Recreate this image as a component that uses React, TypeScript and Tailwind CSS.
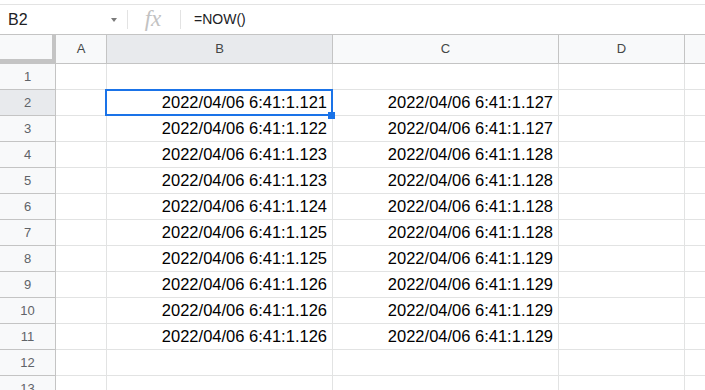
import React from "react";

const colB = [
  "2022/04/06 6:41:1.121",
  "2022/04/06 6:41:1.122",
  "2022/04/06 6:41:1.123",
  "2022/04/06 6:41:1.123",
  "2022/04/06 6:41:1.124",
  "2022/04/06 6:41:1.125",
  "2022/04/06 6:41:1.125",
  "2022/04/06 6:41:1.126",
  "2022/04/06 6:41:1.126",
  "2022/04/06 6:41:1.126",
];
const colC = [
  "2022/04/06 6:41:1.127",
  "2022/04/06 6:41:1.127",
  "2022/04/06 6:41:1.128",
  "2022/04/06 6:41:1.128",
  "2022/04/06 6:41:1.128",
  "2022/04/06 6:41:1.128",
  "2022/04/06 6:41:1.129",
  "2022/04/06 6:41:1.129",
  "2022/04/06 6:41:1.129",
  "2022/04/06 6:41:1.129",
];

export default function App() {
  const rows = Array.from({ length: 13 }, (_, i) => i + 1);
  return (
    <div
      className="w-[705px] h-[390px] overflow-hidden bg-white"
      style={{ fontFamily: '"Liberation Sans", Arial, sans-serif' }}
    >
      {/* formula bar */}
      <div className="mt-[4px] h-[31px] border-y border-t-[#e3e3e3] border-b-[#c4c4c4] flex items-center">
        <div className="w-[127px] flex items-center pl-[8px] pr-[10px]">
          <span className="text-[16px] text-[#202124] flex-1">B2</span>
          <span className="w-0 h-0 border-l-[3px] border-r-[3px] border-t-[4px] border-l-transparent border-r-transparent border-t-[#7a7a7a] mt-[1px]" />
        </div>
        <div className="w-px h-[19px] bg-[#e3e3e3]" />
        <div className="w-[52px] flex justify-center pr-[2px]">
          <span
            className="italic text-[23px] text-[#c2c2c2] leading-none -mt-[2px]"
            style={{ fontFamily: '"Liberation Serif", "Times New Roman", serif' }}
          >
            fx
          </span>
        </div>
        <div className="w-px h-[19px] bg-[#e3e3e3]" />
        <span className="ml-[13px] text-[14px] text-[#202124]">=NOW()</span>
      </div>

      {/* column header */}
      <div className="flex h-[29px] bg-[#f8f9fa] border-b border-[#c4c4c4] text-[13px] text-[#444746]">
        <div className="w-[56px] h-full border-r-[4px] border-b-[4px] border-[#c4c4c4] bg-[#f8f9fa]" />
        <div className="w-[51px] border-r border-[#c4c4c4] flex items-center justify-center">A</div>
        <div className="w-[226px] border-r border-[#c4c4c4] flex items-center justify-center bg-[#e8eaed]">B</div>
        <div className="w-[226px] border-r border-[#c4c4c4] flex items-center justify-center">C</div>
        <div className="w-[126px] border-r border-[#c4c4c4] flex items-center justify-center">D</div>
        <div className="flex-1" />
      </div>

      {/* rows */}
      {rows.map((r) => {
        const b = r >= 2 && r <= 11 ? colB[r - 2] : "";
        const c = r >= 2 && r <= 11 ? colC[r - 2] : "";
        const sel = r === 2;
        return (
          <div key={r} className="flex h-[26px]">
            <div
              className={`w-[56px] border-r border-b border-[#c4c4c4] flex items-center justify-center text-[13px] text-[#5f6368] ${
                sel ? "bg-[#e8eaed]" : "bg-[#f8f9fa]"
              }`}
            >
              {r}
            </div>
            <div className="w-[51px] border-r border-b border-[#e2e3e3]" />
            <div
              className={`w-[226px] border-r border-b border-[#e2e3e3] flex items-center justify-end pr-[5px] text-[16.5px] text-black ${
                sel ? "relative z-10" : ""
              }`}
            >
              {b}
              {sel && (
                <>
                  <div className="absolute -left-[2px] -top-[1px] -right-[1px] -bottom-[1px] border-2 border-[#1a73e8]" />
                  <div className="absolute -right-[3px] -bottom-[4px] w-[7px] h-[7px] bg-[#1a73e8]" />
                </>
              )}
            </div>
            <div className="w-[226px] border-r border-b border-[#e2e3e3] flex items-center justify-end pr-[5px] text-[16.5px] text-black">
              {c}
            </div>
            <div className="w-[126px] border-r border-b border-[#e2e3e3]" />
            <div className="flex-1 border-b border-[#e2e3e3]" />
          </div>
        );
      })}
    </div>
  );
}
